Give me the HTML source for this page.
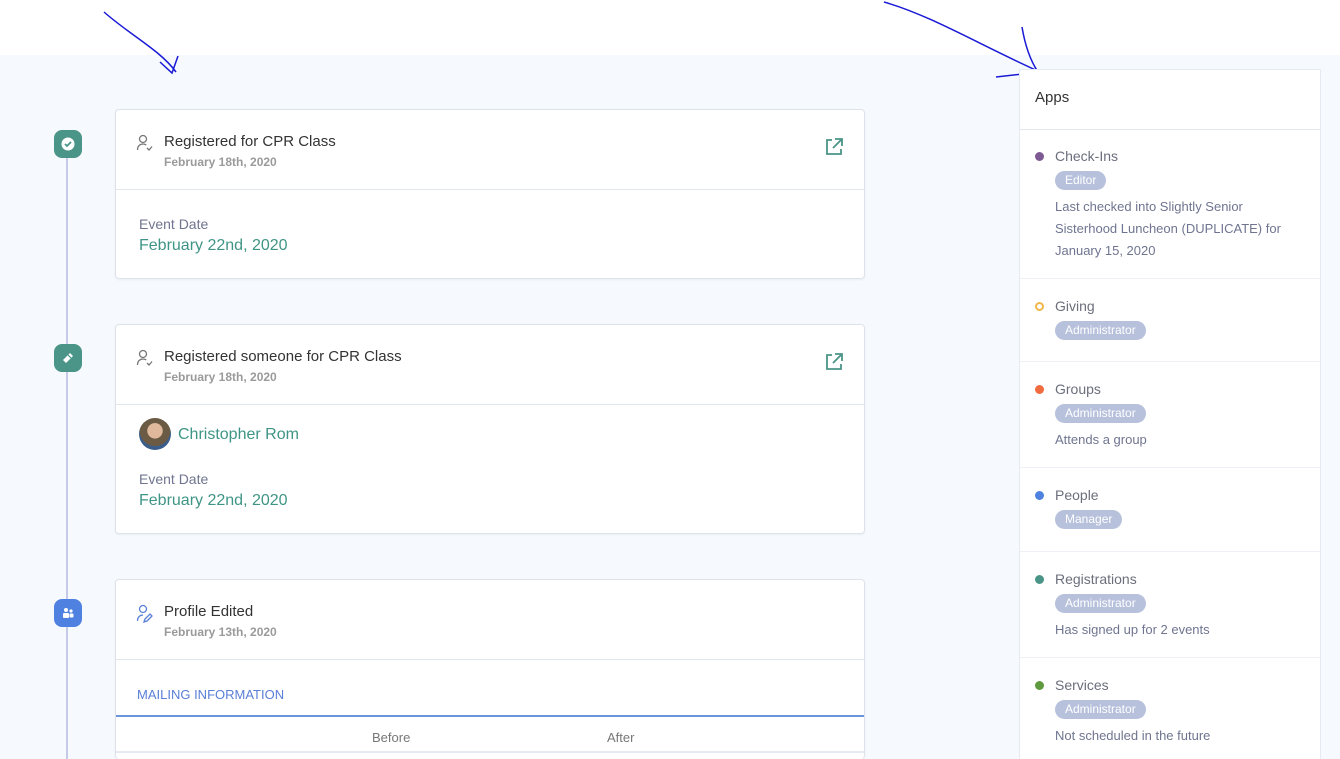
<!DOCTYPE html>
<html><head><style>
*{margin:0;padding:0;box-sizing:border-box}
html,body{width:1340px;height:759px;overflow:hidden}
body{background:#fff;font-family:"Liberation Sans",sans-serif;position:relative}
.bg{position:absolute;left:0;top:55px;width:1340px;height:704px;background:#f6f9fd}
.line{position:absolute;left:66px;top:157px;width:2px;height:602px;background:#c5cbe6}
.ico{position:absolute;left:54px;width:28px;height:28px;border-radius:8px;display:flex;align-items:center;justify-content:center}
.card{position:absolute;left:115px;width:750px;background:#fff;border:1px solid #dde3ec;border-radius:4px;box-shadow:0 1px 2px rgba(0,0,0,.05)}
.hd{height:80px;border-bottom:1px solid #e1e6ef;position:relative}
.hd .t{position:absolute;left:48px;top:23px;font-size:15px;color:#333}
.hd .d{position:absolute;left:48px;top:45px;font-size:12px;color:#9a9a9a;font-weight:bold}
.hd svg.u{position:absolute;left:20px;top:24px}
.hd svg.x{position:absolute;right:20px;top:27px}
.lbl{position:absolute;left:23px;font-size:14px;color:#6f7590}
.val{position:absolute;left:23px;font-size:16px;color:#3f9585}
.side{position:absolute;left:1019px;top:69px;width:302px;height:700px;background:#fff;border:1px solid #e6eaf2}
.side .h{height:60px;border-bottom:1px solid #e1e6ef;padding:19px 15px;font-size:15px;color:#333}
.it{position:absolute;left:0;width:300px;border-bottom:1px solid #eef0f5}
.it .dot{position:absolute;left:15px;top:23px;width:9px;height:9px;border-radius:50%}
.it .n{position:absolute;left:35px;top:19px;font-size:14px;color:#6b6f7c}
.it .b{position:absolute;left:35px;top:42px;height:19px;padding:0 10px;border-radius:10px;background:#b7c1dc;color:#fff;font-size:12px;line-height:19px}
.it .s{position:absolute;left:35px;top:67px;font-size:13px;color:#6f7590;line-height:22px;width:245px}
</style></head><body>
<div class="bg"></div>
<svg style="position:absolute;left:0;top:0" width="1340" height="90">
<path d="M104 12 C130 35 160 50 176 72 M160 62 L172 73 L178 56" stroke="#1a1ad6" stroke-width="1.5" fill="none"/>
<path d="M884 2 C930 15 980 45 1040 72 M1022 27 C1025 45 1030 60 1038 72 M996 77 L1040 72" stroke="#1a1ad6" stroke-width="1.5" fill="none"/>
</svg>
<div class="line"></div>
<div class="ico" style="top:130px;background:#4a9587"><svg width="14" height="14" viewBox="0 0 14 14"><circle cx="7" cy="7" r="6.5" fill="#fff"/><path d="M4 7l2 2 4-4" stroke="#4a9587" stroke-width="1.8" fill="none"/></svg></div>
<div class="ico" style="top:344px;background:#4a9587"><svg width="16" height="16" viewBox="0 0 16 16"><path d="M3 10l7-7 3 3-7 7z" fill="#fff"/><path d="M8 5l3 3" stroke="#4a9587" stroke-width="1.2"/></svg></div>
<div class="ico" style="top:599px;background:#4f82e0"><svg width="14" height="14" viewBox="0 0 14 14"><circle cx="5" cy="4" r="2" fill="#fff"/><circle cx="10" cy="5" r="1.6" fill="#fff"/><rect x="2" y="7" width="6" height="5" rx="1" fill="#fff"/><rect x="8.5" y="7.5" width="4" height="4" rx="1" fill="#fff"/></svg></div>

<div class="card" style="top:109px;height:170px">
<div class="hd"><svg class="u" width="18" height="18" viewBox="0 0 18 18" fill="none" stroke="#777" stroke-width="1.3"><circle cx="7" cy="5" r="3.5"/><path d="M1.5 16c0-4 2.5-6 5.5-6 1.5 0 2.5.4 3.3 1"/><path d="M11 14l2 2 3-3.5"/></svg>
<div class="t">Registered for CPR Class</div><div class="d">February 18th, 2020</div>
<svg class="x" width="20" height="20" viewBox="0 0 20 20" fill="none" stroke="#4a9587" stroke-width="1.8"><path d="M8 3H3v14h14v-5"/><path d="M11 2h7v7M18 2l-9 9"/></svg></div>
<div class="lbl" style="top:106px">Event Date</div><div class="val" style="top:127px">February 22nd, 2020</div>
</div>

<div class="card" style="top:324px;height:210px">
<div class="hd"><svg class="u" width="18" height="18" viewBox="0 0 18 18" fill="none" stroke="#777" stroke-width="1.3"><circle cx="7" cy="5" r="3.5"/><path d="M1.5 16c0-4 2.5-6 5.5-6 1.5 0 2.5.4 3.3 1"/><path d="M11 14l2 2 3-3.5"/></svg>
<div class="t">Registered someone for CPR Class</div><div class="d">February 18th, 2020</div>
<svg class="x" width="20" height="20" viewBox="0 0 20 20" fill="none" stroke="#4a9587" stroke-width="1.8"><path d="M8 3H3v14h14v-5"/><path d="M11 2h7v7M18 2l-9 9"/></svg></div>
<div style="position:absolute;left:23px;top:93px;width:32px;height:32px;border-radius:50%;background:radial-gradient(circle at 50% 40%,#e0b89c 0 30%,#6b5a44 32% 60%,#3a5d8a 62%)"></div>
<div class="val" style="top:101px;left:62px">Christopher Rom</div>
<div class="lbl" style="top:146px">Event Date</div><div class="val" style="top:167px">February 22nd, 2020</div>
</div>

<div class="card" style="top:579px;height:180px;border-bottom:none">
<div class="hd"><svg class="u" width="18" height="20" viewBox="0 0 18 20" fill="none" stroke="#5a7fd6" stroke-width="1.3"><circle cx="7" cy="5" r="3.5"/><path d="M1.5 17c0-4 2.5-6 5.5-6"/><path d="M8 18l1-3 5-5 2 2-5 5z"/></svg>
<div class="t">Profile Edited</div><div class="d">February 13th, 2020</div></div>
<div style="position:absolute;left:21px;top:107px;font-size:13px;color:#5a7fd6">MAILING INFORMATION</div>
<div style="position:absolute;left:0;top:135px;width:748px;height:2px;background:#6a94dc"></div>
<div style="position:absolute;left:256px;top:150px;font-size:13px;color:#777">Before</div>
<div style="position:absolute;left:491px;top:150px;font-size:13px;color:#777">After</div>
<div style="position:absolute;left:0;top:171px;width:748px;height:2px;background:#e6e9ef"></div>
</div>

<div class="side"><div class="h">Apps</div>
<div class="it" style="top:59px;height:150px"><div class="dot" style="background:#7d5a93"></div><div class="n">Check-Ins</div><div class="b">Editor</div><div class="s">Last checked into Slightly Senior Sisterhood Luncheon (DUPLICATE) for January 15, 2020</div></div>
<div class="it" style="top:209px;height:83px"><div class="dot" style="border:2px solid #f0b64a"></div><div class="n">Giving</div><div class="b">Administrator</div></div>
<div class="it" style="top:292px;height:106px"><div class="dot" style="background:#f06b3f"></div><div class="n">Groups</div><div class="b">Administrator</div><div class="s">Attends a group</div></div>
<div class="it" style="top:398px;height:84px"><div class="dot" style="background:#4f82e0"></div><div class="n">People</div><div class="b">Manager</div></div>
<div class="it" style="top:482px;height:106px"><div class="dot" style="background:#4a9587"></div><div class="n">Registrations</div><div class="b">Administrator</div><div class="s">Has signed up for 2 events</div></div>
<div class="it" style="top:588px;height:106px;border:none"><div class="dot" style="background:#5f9a3e"></div><div class="n">Services</div><div class="b">Administrator</div><div class="s">Not scheduled in the future</div></div>
</div>
</body></html>
